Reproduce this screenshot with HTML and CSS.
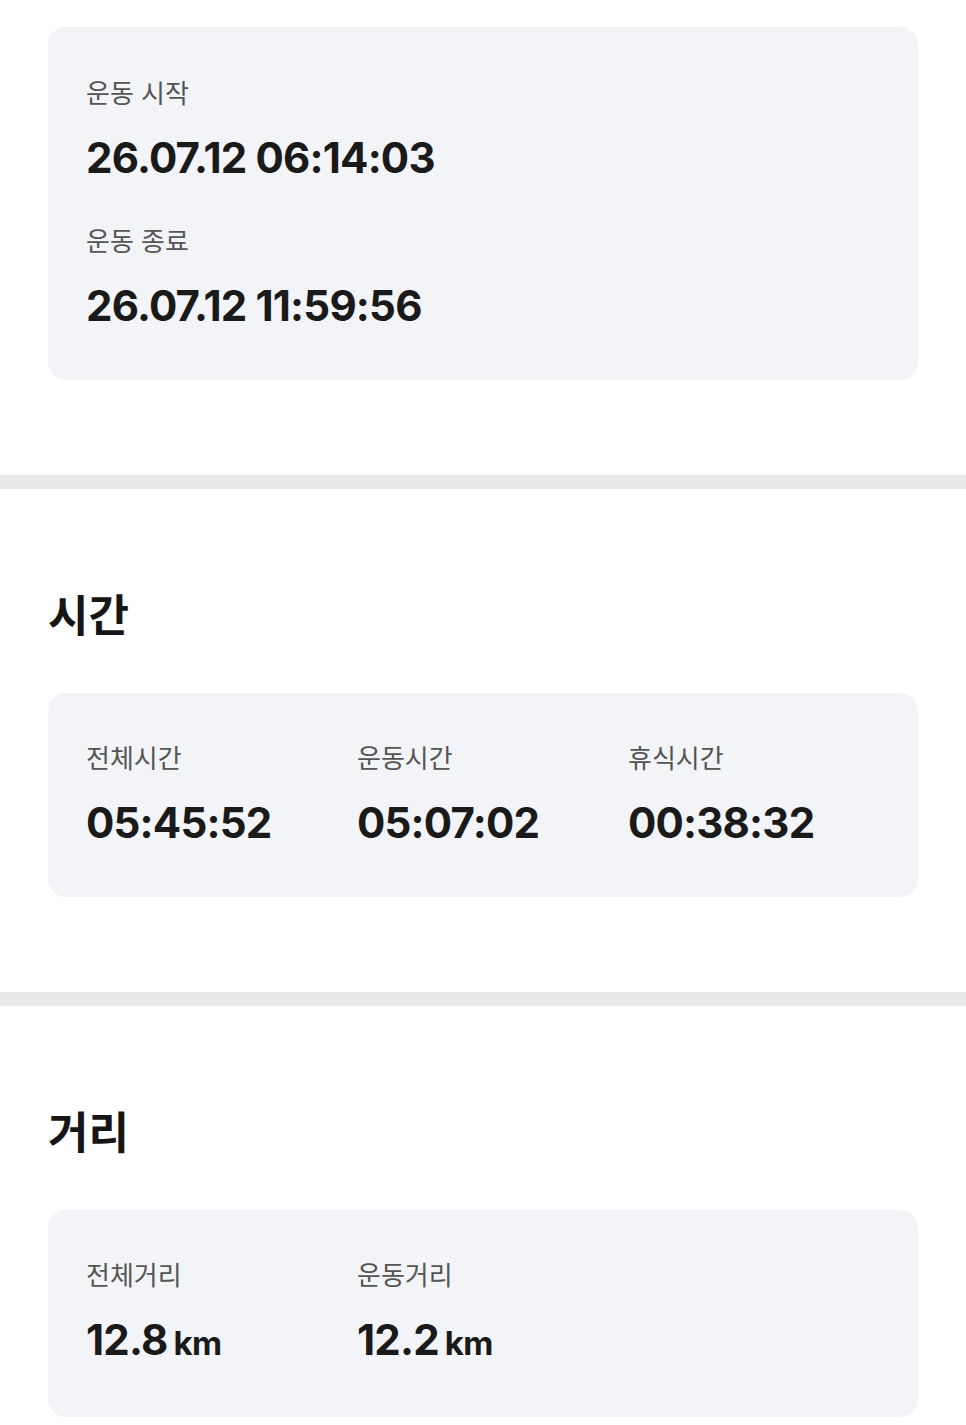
FILE: index.html
```html
<!DOCTYPE html>
<html lang="ko">
<head>
    <meta charset="UTF-8">
    <meta name="viewport" content="width=device-width, initial-scale=1.0">
    <title>운동 기록</title>
    <link rel="stylesheet" href="styles.css">
</head>
<body>
    <section class="section section-first">
        <div class="card card-stack">
            <div class="item">
                <p class="label">운동 시작</p>
                <p class="value">26.07.12 06:14:03</p>
            </div>
            <div class="item">
                <p class="label">운동 종료</p>
                <p class="value">26.07.12 11:59:56</p>
            </div>
        </div>
    </section>

    <div class="divider"></div>

    <section class="section">
        <h2 class="title">시간</h2>
        <div class="card card-row">
            <div class="item">
                <p class="label">전체시간</p>
                <p class="value">05:45:52</p>
            </div>
            <div class="item">
                <p class="label">운동시간</p>
                <p class="value">05:07:02</p>
            </div>
            <div class="item">
                <p class="label">휴식시간</p>
                <p class="value">00:38:32</p>
            </div>
        </div>
    </section>

    <div class="divider"></div>

    <section class="section section-last">
        <h2 class="title">거리</h2>
        <div class="card card-row">
            <div class="item">
                <p class="label">전체거리</p>
                <p class="value">12.8<span class="unit">km</span></p>
            </div>
            <div class="item">
                <p class="label">운동거리</p>
                <p class="value">12.2<span class="unit">km</span></p>
            </div>
        </div>
    </section>
</body>
</html>
```

FILE: styles.css
```css
body {
    margin: 0;
    background-color: #fff;
    color: #1a1a1a;
    font-family: 'Inter', 'Noto Sans CJK KR', sans-serif;
}

p, h2 {
    margin: 0;
}

.section {
    padding: 96px 48px 95px;
}

.section-first {
    padding-top: 27px;
}

.section-last {
    padding-bottom: 10px;
}

.divider {
    height: 14px;
    background-color: #e9e9e9;
}

.title {
    font-family: 'Noto Sans CJK KR', sans-serif;
    font-size: 44px;
    line-height: 56px;
    font-weight: 700;
    color: #161616;
    margin-bottom: 52px;
}

.card {
    background-color: #f3f4f8;
    border-radius: 18px;
    padding: 47px 38px 46px;
}

.card-stack {
    display: flex;
    flex-direction: column;
    gap: 37px;
    padding-top: 48px;
}

.card-row {
    display: grid;
    grid-template-columns: repeat(3, 271px);
}

.label {
    font-family: 'Noto Sans CJK KR', sans-serif;
    font-size: 26px;
    line-height: 34px;
    color: #555;
    margin-bottom: 21px;
}

.value {
    font-size: 42px;
    line-height: 56px;
    font-weight: 700;
    letter-spacing: -0.8px;
    color: #1a1a1a;
}

.unit {
    font-size: 33px;
    margin-left: 6px;
}
```
